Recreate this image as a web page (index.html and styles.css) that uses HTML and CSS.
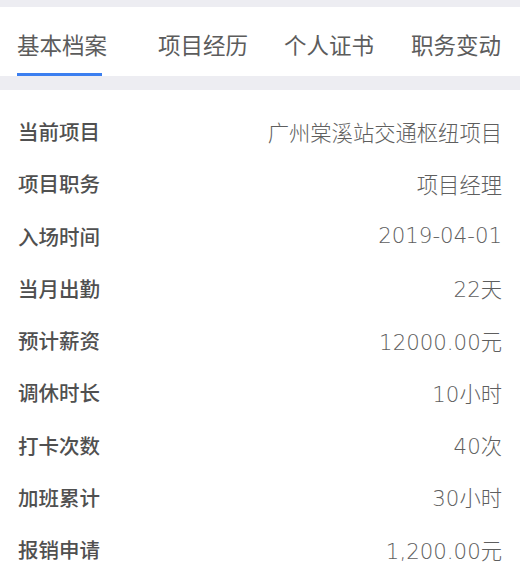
FILE: index.html
```html
<!DOCTYPE html>
<html lang="zh-CN">
<head>
<meta charset="utf-8">
<link rel="stylesheet" href="styles.css">
</head>
<body>
<div class="page">
  <nav class="tabs">
    <div class="tab active">基本档案</div>
    <div class="tab t2">项目经历</div>
    <div class="tab t3">个人证书</div>
    <div class="tab t4">职务变动</div>
  </nav>
  <div class="sep"></div>
  <section class="list">
    <div class="row"><span class="label">当前项目</span><span class="value">广州棠溪站交通枢纽项目</span></div>
    <div class="row"><span class="label">项目职务</span><span class="value">项目经理</span></div>
    <div class="row"><span class="label">入场时间</span><span class="value">2019-04-01</span></div>
    <div class="row"><span class="label">当月出勤</span><span class="value">22天</span></div>
    <div class="row"><span class="label">预计薪资</span><span class="value">12000.00元</span></div>
    <div class="row"><span class="label">调休时长</span><span class="value">10小时</span></div>
    <div class="row"><span class="label">打卡次数</span><span class="value">40次</span></div>
    <div class="row"><span class="label">加班累计</span><span class="value">30小时</span></div>
    <div class="row"><span class="label">报销申请</span><span class="value">1,200.00元</span></div>
  </section>
</div>
</body>
</html>
```
FILE: styles.css
```css
* { box-sizing: border-box; }
html, body { margin: 0; padding: 0; }
body {
  background: #ffffff;
  font-family: "Noto Sans CJK SC", "Noto Sans", sans-serif;
  width: 520px;
  height: 563px;
  overflow: hidden;
}
.page {
  padding-top: 7px;
  background: #ededf2;
}
.tabs {
  background: #ffffff;
  height: 69px;
  display: flex;
  align-items: flex-start;
  padding-left: 17px;
}
.tab {
  font-size: 22.5px;
  line-height: 32px;
  color: #5c5c5c;
  margin-top: 21px;
  white-space: nowrap;
  position: relative;
  height: 48px;
}
.tab.active::after {
  content: "";
  position: absolute;
  left: 0;
  width: 85px;
  bottom: 0;
  height: 3px;
  background: #3b7ff0;
}
.t2 { margin-left: 51px; }
.t3 { margin-left: 36px; }
.t4 { margin-left: 37px; }
.sep {
  height: 14px;
  background: #ededf2;
}
.list {
  background: #ffffff;
  padding: 15px 18px 0 18px;
  height: 473px;
}
.row {
  height: 52.25px;
  display: flex;
  align-items: center;
  justify-content: space-between;
}
.label {
  font-size: 20.5px;
  font-weight: 500;
  color: #505050;
}
.value {
  font-family: "DejaVu Sans", "Noto Sans CJK SC", sans-serif;
  font-weight: 300;
  font-size: 21.3px;
  color: #5e5e5e;
}
```
